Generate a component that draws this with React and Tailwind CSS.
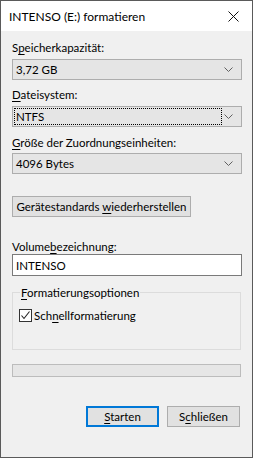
import React from "react";

function U({ children }) {
  return <span className="underline underline-offset-[2px] decoration-[1px]">{children}</span>;
}

function Chevron() {
  return (
    <svg width="9" height="5" viewBox="0 0 9 5" className="block">
      <polyline points="0.5,0.5 4.5,4.5 8.5,0.5" fill="none" stroke="#606060" strokeWidth="1" />
    </svg>
  );
}

function Combo({ children, mt, focus }) {
  return (
    <div className={`${mt} h-[21px] w-full border border-[#adadad] bg-[#e5e5e5] flex items-center pr-[8px]`}>
      <div className="flex-1 h-full flex items-center">
        {focus ? (
          <div className="ml-[1px] h-[17px] w-[208px] border border-dotted border-black flex items-center pl-[1px]">
            {children}
          </div>
        ) : (
          <div className="pl-[3px]">{children}</div>
        )}
      </div>
      <Chevron />
    </div>
  );
}

export default function App() {
  return (
    <div className="w-[253px] h-[458px] bg-[#f0f0f0] border border-[#5a5a5a] flex flex-col text-[11.5px] leading-[15px] text-black font-['Lato',sans-serif]">
      <div className="h-[30px] bg-white flex items-center justify-between pl-[8px] pr-[13px] shrink-0">
        <span className="text-[12px] whitespace-nowrap">INTENSO (E:) formatieren</span>
        <svg width="11" height="11" viewBox="0 0 11 11">
          <path d="M0.5 0.5 L10.5 10.5 M10.5 0.5 L0.5 10.5" stroke="#111" strokeWidth="1" />
        </svg>
      </div>
      <div className="pl-[11px] pr-[10px] flex flex-col">
        <div className="mt-[9px] h-[15px]">S<U>p</U>eicherkapazität:</div>
        <Combo mt="mt-[4px]">3,72 GB</Combo>
        <div className="mt-[7px] h-[15px]"><U>D</U>ateisystem:</div>
        <Combo mt="mt-[4px]" focus>NTFS</Combo>
        <div className="mt-[8px] h-[15px]"><U>G</U>röße der Zuordnungseinheiten:</div>
        <Combo mt="mt-[3px]">4096 Bytes</Combo>
        <div className="mt-[22px] h-[21px] w-[179px] border border-[#adadad] bg-[#e1e1e1] flex items-center justify-center whitespace-nowrap">
          <span className="whitespace-nowrap">Gerätestandards <U>w</U>iederherstellen</span>
        </div>
        <div className="mt-[22px] h-[15px]">Volume<U>b</U>ezeichnung:</div>
        <div className="h-[22px] w-full border border-[#7a7a7a] bg-white flex items-center pl-[3px]">INTENSO</div>
        <div className="relative mt-[16px] h-[58px] w-[229px] border border-[#dcdcdc] pt-[15px] pl-[6px]">
          <div className="absolute top-[-8px] left-[7px] bg-[#f0f0f0] px-[1px] text-black whitespace-nowrap"><U>F</U>ormatierungsoptionen</div>
          <div className="flex items-center gap-[2px]">
            <div className="w-[13px] h-[13px] border border-[#333333] bg-white flex items-center justify-center">
              <svg width="11" height="11" viewBox="0 0 11 11">
                <path d="M1.5 5.5 L4 8.5 L9.5 1.5" fill="none" stroke="#222" strokeWidth="1.1" />
              </svg>
            </div>
            <span>Sch<U>n</U>ellformatierung</span>
          </div>
        </div>
        <div className="mt-[14px] h-[13px] w-[229px] border border-[#bcbcbc] bg-[#e6e6e6]" />
        <div className="mt-[29px] flex justify-end gap-[8px] mr-[2px]">
          <div className="w-[73px] h-[21px] border-2 border-[#0078d7] bg-[#e1e1e1] flex items-center justify-center">
            <span><U>S</U>tarten</span>
          </div>
          <div className="w-[73px] h-[21px] border border-[#adadad] bg-[#e1e1e1] flex items-center justify-center">
            <span>S<U>c</U>hließen</span>
          </div>
        </div>
      </div>
    </div>
  );
}
